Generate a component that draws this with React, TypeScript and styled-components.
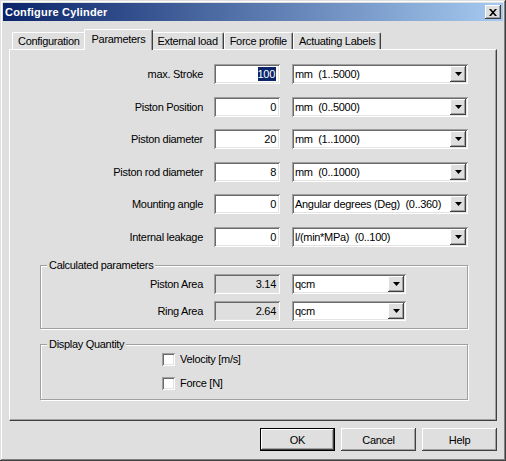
import React from "react";
import styled, { createGlobalStyle, css } from "styled-components";

const face = "#dfdfdf";

const GlobalStyle = createGlobalStyle`
  html, body {
    margin: 0;
    padding: 0;
    background: ${face};
  }
  body {
    font-family: "Liberation Sans", Arial, sans-serif;
    font-size: 11px;
    letter-spacing: -0.3px;
    color: #000;
  }
`;

const raised = css`
  box-shadow: inset -1px -1px #404040, inset 1px 1px #fff, inset -2px -2px #a0a0a0,
    inset 2px 2px ${face};
`;

const sunken = css`
  box-shadow: inset 1px 1px #a0a0a0, inset -1px -1px #fff, inset 2px 2px #696969,
    inset -2px -2px #e3e3e3;
`;

const Window = styled.div`
  width: 506px;
  height: 461px;
  box-sizing: border-box;
  padding: 3px;
  background: ${face};
  box-shadow: inset -1px -1px #404040, inset 1px 1px ${face}, inset -2px -2px #808080,
    inset 2px 2px #fff;
  display: flex;
  flex-direction: column;
`;

const TitleBar = styled.div`
  height: 18px;
  display: flex;
  align-items: center;
  justify-content: space-between;
  padding: 0 2px 0 2px;
  background: linear-gradient(to right, #0a246a, #a6caf0);
`;

const Title = styled.span`
  color: #fff;
  font-weight: bold;
  font-size: 11px;
  letter-spacing: 0.2px;
`;

const CloseButton = styled.div`
  width: 16px;
  height: 14px;
  box-sizing: border-box;
  background: ${face};
  ${raised};
  display: flex;
  align-items: center;
  justify-content: center;
`;

const Body = styled.div`
  flex: 1;
  display: flex;
  flex-direction: column;
  padding: 8px 6px 0 6px;
`;

const TabStrip = styled.div`
  display: flex;
  align-items: flex-end;
  height: 20px;
  padding-left: 3px;
  position: relative;
  z-index: 1;
`;

const Tab = styled.div<{ $active?: boolean }>`
  box-sizing: border-box;
  height: ${(p) => (p.$active ? 21 : 17)}px;
  padding: 0 ${(p) => (p.$active ? 7 : 5)}px ${(p) => (p.$active ? 2 : 0)}px;
  margin: 0 ${(p) => (p.$active ? -2 : 0)}px ${(p) => (p.$active ? -1 : 0)}px;
  display: flex;
  align-items: center;
  background: ${face};
  border-top: 1px solid #fff;
  border-left: 1px solid #fff;
  border-right: 1px solid #404040;
  border-radius: 2px 2px 0 0;
  box-shadow: inset -1px 0 #a0a0a0;
  position: relative;
  z-index: ${(p) => (p.$active ? 2 : 1)};
  white-space: nowrap;
`;

const Panel = styled.div`
  height: 372px;
  box-sizing: border-box;
  border-top: 1px solid #fff;
  border-left: 1px solid #fff;
  border-right: 1px solid #404040;
  border-bottom: 1px solid #404040;
  box-shadow: inset -1px -1px #a0a0a0;
  padding-top: 14px;
  display: flex;
  flex-direction: column;
`;

const Rows = styled.div`
  display: flex;
  flex-direction: column;
  gap: 12.6px;
`;

const Row = styled.div`
  display: flex;
  align-items: center;
  height: 20px;
`;

const Label = styled.span<{ $w: number }>`
  width: ${(p) => p.$w}px;
  text-align: right;
  white-space: nowrap;
`;

const Field = styled.div<{ $readonly?: boolean }>`
  width: 66px;
  height: 20px;
  box-sizing: border-box;
  margin-left: 11px;
  padding: 0 4px 0 3px;
  background: ${(p) => (p.$readonly ? face : "#fff")};
  ${sunken};
  display: flex;
  align-items: center;
  justify-content: flex-end;
`;

const Selected = styled.span`
  background: #0a246a;
  color: #fff;
  line-height: 14px;
  padding-right: 1px;
`;

const Select = styled.div<{ $w: number }>`
  width: ${(p) => p.$w}px;
  height: 20px;
  box-sizing: border-box;
  margin-left: 12px;
  padding: 2px;
  background: #fff;
  ${sunken};
  display: flex;
`;

const SelectText = styled.span`
  flex: 1;
  display: flex;
  align-items: center;
  padding-left: 1px;
  white-space: pre;
`;

const DropButton = styled.span`
  width: 16px;
  background: ${face};
  ${raised};
  display: flex;
  align-items: center;
  justify-content: center;
`;

const Group = styled.div<{ $top: number }>`
  position: relative;
  margin: ${(p) => p.$top}px 0 0 30px;
  width: 428px;
  box-sizing: border-box;
  border: 1px solid #a0a0a0;
  box-shadow: inset 1px 1px #fff, 1px 1px #fff;
`;

const Legend = styled.span`
  position: absolute;
  top: -7px;
  left: 6px;
  padding: 0 2px;
  background: ${face};
  white-space: nowrap;
`;

const GroupRows = styled.div`
  display: flex;
  flex-direction: column;
  gap: 7px;
  padding: 8px 0 7px;
`;

const CheckRows = styled.div`
  display: flex;
  flex-direction: column;
  gap: 11px;
  padding: 8px 0 9px 121px;
`;

const CheckRow = styled.div`
  display: flex;
  align-items: center;
  gap: 5px;
  height: 13px;
`;

const CheckBox = styled.span`
  width: 13px;
  height: 13px;
  box-sizing: border-box;
  background: #fff;
  ${sunken};
`;

const ButtonBar = styled.div`
  display: flex;
  justify-content: flex-end;
  gap: 6px;
  margin-top: 7px;
`;

const Button = styled.div<{ $default?: boolean }>`
  width: 75px;
  height: 23px;
  box-sizing: border-box;
  background: ${face};
  display: flex;
  align-items: center;
  justify-content: center;
  ${(p) =>
    p.$default
      ? css`
          border: 1px solid #000;
          ${raised};
        `
      : raised};
`;

const Arrow = () => (
  <svg width="7" height="4" viewBox="0 0 7 4">
    <polygon points="0,0 7,0 3.5,4" fill="#000" />
  </svg>
);

const tabs = ["Configuration", "Parameters", "External load", "Force profile", "Actuating Labels"];

const params = [
  { label: "max. Stroke", value: "100", unit: "mm  (1..5000)", selected: true },
  { label: "Piston Position", value: "0", unit: "mm  (0..5000)" },
  { label: "Piston diameter", value: "20", unit: "mm  (1..1000)" },
  { label: "Piston rod diameter", value: "8", unit: "mm  (0..1000)" },
  { label: "Mounting angle", value: "0", unit: "Angular degrees (Deg)  (0..360)" },
  { label: "Internal leakage", value: "0", unit: "l/(min*MPa)  (0..100)" },
];

const calculated = [
  { label: "Piston Area", value: "3.14" },
  { label: "Ring Area", value: "2.64" },
];

export default function App() {
  return (
    <>
      <GlobalStyle />
      <Window>
        <TitleBar>
          <Title>Configure Cylinder</Title>
          <CloseButton>
            <svg width="8" height="7" viewBox="0 0 8 7">
              <path d="M0 0h2l2 2.3L6 0h2L5 3.5 8 7H6L4 4.7 2 7H0l3-3.5z" fill="#000" />
            </svg>
          </CloseButton>
        </TitleBar>
        <Body>
          <TabStrip>
            {tabs.map((t) => (
              <Tab key={t} $active={t === "Parameters"}>
                {t}
              </Tab>
            ))}
          </TabStrip>
          <Panel>
            <Rows>
              {params.map((p) => (
                <Row key={p.label}>
                  <Label $w={193}>{p.label}</Label>
                  <Field>{p.selected ? <Selected>{p.value}</Selected> : p.value}</Field>
                  <Select $w={176}>
                    <SelectText>{p.unit}</SelectText>
                    <DropButton>
                      <Arrow />
                    </DropButton>
                  </Select>
                </Row>
              ))}
            </Rows>
            <Group $top={18}>
              <Legend>Calculated parameters</Legend>
              <GroupRows>
                {calculated.map((c) => (
                  <Row key={c.label}>
                    <Label $w={162}>{c.label}</Label>
                    <Field $readonly>{c.value}</Field>
                    <Select $w={114}>
                      <SelectText>qcm</SelectText>
                      <DropButton>
                        <Arrow />
                      </DropButton>
                    </Select>
                  </Row>
                ))}
              </GroupRows>
            </Group>
            <Group $top={15}>
              <Legend>Display Quantity</Legend>
              <CheckRows>
                <CheckRow>
                  <CheckBox />
                  <span>Velocity [m/s]</span>
                </CheckRow>
                <CheckRow>
                  <CheckBox />
                  <span>Force [N]</span>
                </CheckRow>
              </CheckRows>
            </Group>
          </Panel>
          <ButtonBar>
            <Button $default>OK</Button>
            <Button>Cancel</Button>
            <Button>Help</Button>
          </ButtonBar>
        </Body>
      </Window>
    </>
  );
}
